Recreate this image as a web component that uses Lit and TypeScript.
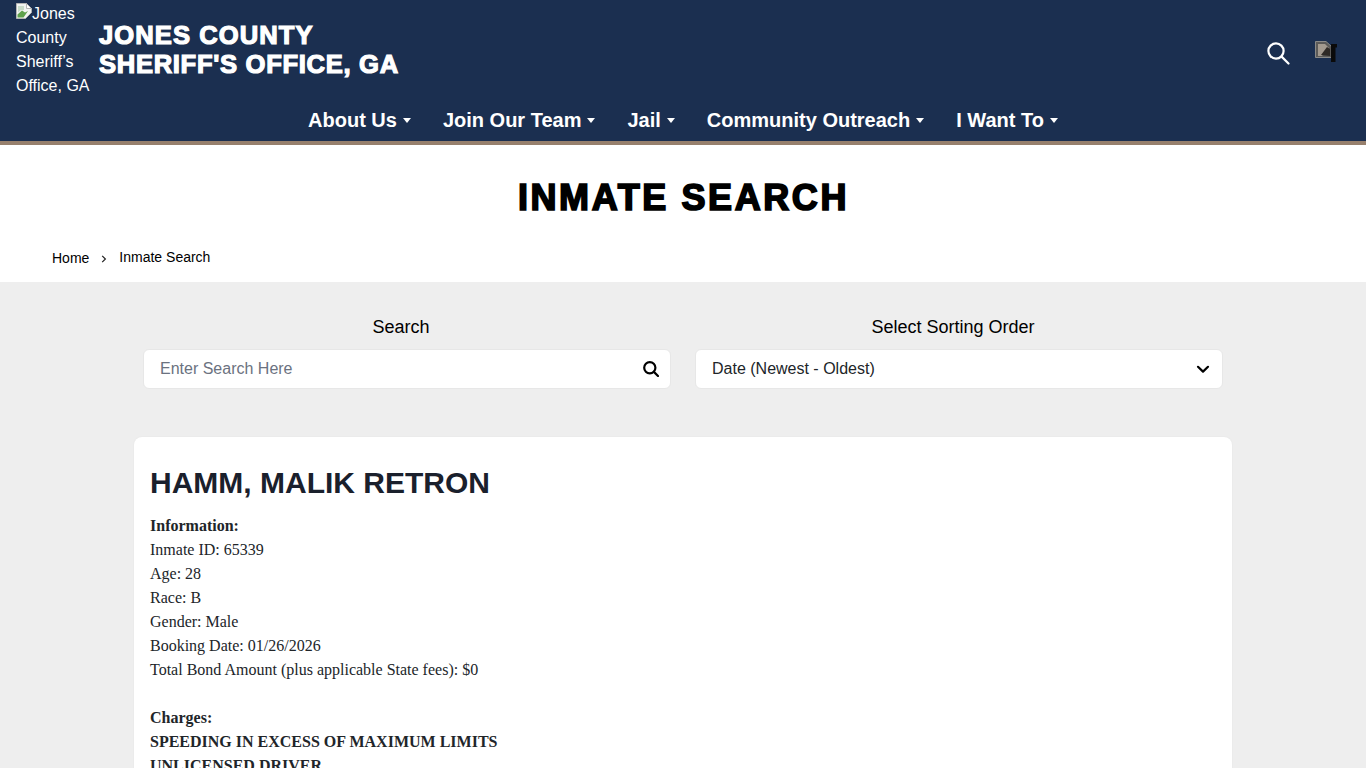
import { LitElement, html, css, svg } from "lit";
import { customElement } from "lit/decorators.js";

const brokenIcon = svg`<svg class="broken" viewBox="0 0 16 16" width="16" height="16" aria-hidden="true">
  <path d="M.5 .5H10.5L15.5 5.5V9.5L9.5 15.5H.5Z" fill="#f1f3f1" stroke="#b4b4b4" stroke-width="1"/>
  <path d="M10.5 .5V5.5H15.5Z" fill="#fff" stroke="#b4b4b4" stroke-width="1"/>
  <path d="M1.5 14.5V11.5L6 7.5L9 9.5L12 8L7.5 14.5Z" fill="#5fa14c"/>
  <path d="M2 3H8V7L5 7L2 9.5Z" fill="#c8dbc8"/>
</svg>`;

@customElement("app-root")
export class AppRoot extends LitElement {
  static styles = css`
    :host { display: block; height: 768px; overflow: hidden; background: #eee; font-family: "Liberation Sans", Arial, sans-serif; }
    * { box-sizing: border-box; }
    header { background: #1b2f50; border-bottom: 4px solid #97806d; height: 145px; color: #fff; display: flex; flex-direction: column; }
    .top { display: flex; align-items: flex-start; height: 100px; padding: 2px 0 0 16px; }
    .logo { width: 83px; font-size: 16px; line-height: 24px; flex: none; }
    .broken { vertical-align: 0; }
    .site { margin: 19px 0 0; font-size: 25.6px; line-height: 29px; font-weight: 700; -webkit-text-stroke: 1.2px #fff; }
    .l1 { letter-spacing: 1.05px; }
    .l2 { letter-spacing: .68px; }
    .tools { margin-left: auto; display: flex; align-items: flex-start; padding: 39px 27px 0 0; gap: 25px; }
    .tools .cart { width: 24px; height: 22px; margin-top: 0; display: flex; }
    .search-ic { display: block; }
    nav { display: flex; justify-content: center; gap: 32px; height: 41px; align-items: flex-start; padding-top: 8px; }
    nav a { font-size: 20px; line-height: 24px; font-weight: 700; color: #fff; display: flex; align-items: center; }
    nav a i { display: block; width: 0; height: 0; border-left: 4px solid transparent; border-right: 4px solid transparent; border-top: 5px solid #fff; margin: 1px 0 0 6px; }
    .head { background: #fff; height: 137px; display: flex; flex-direction: column; }
    h1 { margin: 0; padding: 31px 0 0 1px; text-align: center; font-size: 36px; line-height: 44px; color: #000; font-weight: 700; letter-spacing: 2.6px; -webkit-text-stroke: 1.7px #000; }
    .crumbs { display: flex; align-items: center; padding: 27px 0 0 52px; font-size: 14px; line-height: 20px; color: #000; }
    .crumbs .home { position: relative; top: 1px; }
    .crumbs .sep { margin: 0 12px 0 12px; display: block; position: relative; top: 2px; }
    .filters { display: grid; grid-template-columns: 528px 528px; gap: 24px; padding: 33px 143px 0; }
    .f label { display: block; text-align: center; font-size: 18px; line-height: 24px; color: #000; margin: 0 12px 10px 0; }
    .field { height: 40px; background: #fff; border: 1px solid #e7e7e7; border-radius: 6px; display: flex; align-items: center; justify-content: space-between; padding: 0 11px 0 16px; font-size: 16px; }
    .ph { color: #6b7280; }
    .val { color: #212529; }
    .card { margin: 48px 134px 0; background: #fff; border-radius: 8px; padding: 28px 16px 0; height: 400px; box-shadow: 0 0 2px rgba(0,0,0,.05); }
    h2 { margin: 0 0 11px; font-size: 30px; line-height: 36px; padding-bottom: 2px; font-weight: 700; color: #1a202c; }
    .info { font-family: "Liberation Serif", "Times New Roman", serif; font-size: 16px; line-height: 24px; color: #212529; }
    .info div { min-height: 24px; }
    .info b { font-weight: 700; }
  `;

  render() {
    const items = ["About Us", "Join Our Team", "Jail", "Community Outreach", "I Want To"];
    return html`
      <header>
        <div class="top">
          <div class="logo">${brokenIcon}Jones County Sheriff’s Office, GA</div>
          <p class="site"><span class="l1">JONES COUNTY</span><br /><span class="l2">SHERIFF'S OFFICE, GA</span></p>
          <div class="tools">
            <svg class="search-ic" width="24" height="24" viewBox="0 0 24 24" fill="none" stroke="#fff" stroke-width="2.2" aria-label="Search">
              <circle cx="10" cy="10" r="7.6"/><path d="M15.6 15.6L22.5 22.5" stroke-linecap="round"/>
            </svg>
            <span class="cart">
              <svg width="24" height="22" viewBox="0 0 24 22" aria-hidden="true">
                <path d="M.5 .5H11L17 6V16.5H.5Z" fill="#5b5a58" stroke="#8a8a88"/>
                <path d="M3 3H10L14 7L7 15H3Z" fill="#a39a8f"/>
                <path d="M6 14L12 6L15 8V15Z" fill="#2f2a26"/>
                <rect x="16" y="3" width="6" height="3.5" fill="#0a0a0a"/>
                <rect x="16" y="3" width="4.5" height="18" fill="#0a0a0a"/>
              </svg>
            </span>
          </div>
        </div>
        <nav>${items.map((t) => html`<a>${t}<i></i></a>`)}</nav>
      </header>
      <section class="head">
        <h1>INMATE SEARCH</h1>
        <div class="crumbs">
          <span class="home">Home</span>
          <svg class="sep" width="6" height="8" viewBox="0 0 6 8" fill="none" stroke="#222" stroke-width="1.2"><path d="M1.2 .8L4.4 4L1.2 7.2"/></svg>
          <span>Inmate Search</span>
        </div>
      </section>
      <section class="filters">
        <div class="f">
          <label>Search</label>
          <div class="field">
            <span class="ph">Enter Search Here</span>
            <svg width="16" height="16" viewBox="0 0 16 16" fill="none" stroke="#000" stroke-width="2.2"><circle cx="6.8" cy="6.8" r="5.6"/><path d="M10.9 10.9L15 15" stroke-linecap="round"/></svg>
          </div>
        </div>
        <div class="f">
          <label>Select Sorting Order</label>
          <div class="field">
            <span class="val">Date (Newest - Oldest)</span>
            <svg width="16" height="16" viewBox="0 0 16 16" fill="none" stroke="#000" stroke-width="2.2"><path d="M3 5.8L8 10.6L13 5.8" stroke-linecap="round" stroke-linejoin="round"/></svg>
          </div>
        </div>
      </section>
      <article class="card">
        <h2>HAMM, MALIK RETRON</h2>
        <div class="info">
          <div><b>Information:</b></div>
          <div>Inmate ID: 65339</div>
          <div>Age: 28</div>
          <div>Race: B</div>
          <div>Gender: Male</div>
          <div>Booking Date: 01/26/2026</div>
          <div>Total Bond Amount (plus applicable State fees): $0</div>
          <div></div>
          <div><b>Charges:</b></div>
          <div><b>SPEEDING IN EXCESS OF MAXIMUM LIMITS</b></div>
          <div><b>UNLICENSED DRIVER</b></div>
        </div>
      </article>
    `;
  }
}
